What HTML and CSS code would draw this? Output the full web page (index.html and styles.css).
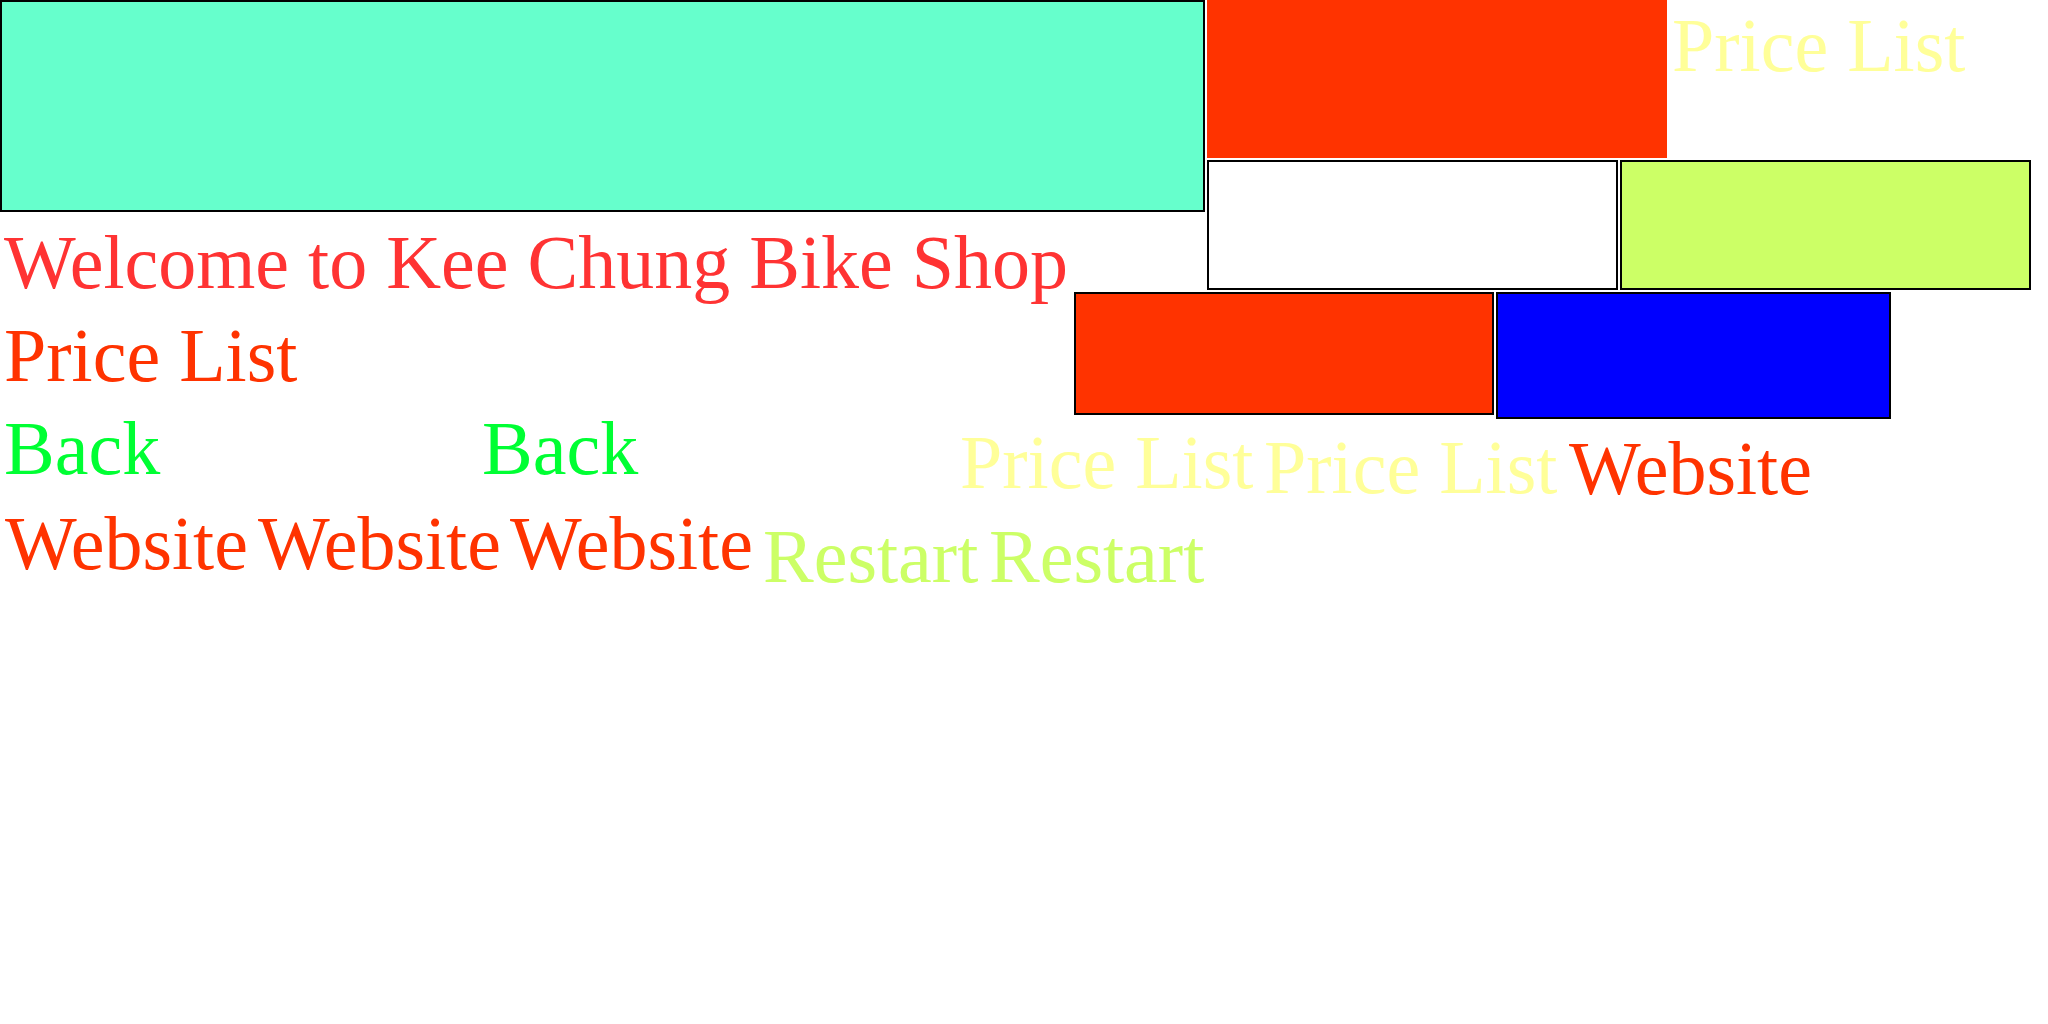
FILE: index.html
```html
<!DOCTYPE html>
<html lang="en">
<head>
<meta charset="utf-8">
<title>Kee Chung Bike Shop</title>
<link rel="stylesheet" href="styles.css">
</head>
<body>
<div class="stage">
  <div class="box teal"></div>
  <div class="box red-top"></div>
  <div class="box white"></div>
  <div class="box lime"></div>
  <div class="box red-mid"></div>
  <div class="box blue"></div>

  <div class="label welcome">Welcome to Kee Chung Bike Shop</div>
  <div class="label price-red">Price List</div>
  <div class="label back back-1">Back</div>
  <div class="label back back-2">Back</div>
  <div class="label website website-1">Website</div>
  <div class="label website website-2">Website</div>
  <div class="label website website-3">Website</div>
  <div class="label restart restart-1">Restart</div>
  <div class="label restart restart-2">Restart</div>
  <div class="label price-yellow price-y-1">Price List</div>
  <div class="label price-yellow price-y-2">Price List</div>
  <div class="label website website-4">Website</div>
  <div class="label price-yellow price-y-top">Price List</div>
</div>
</body>
</html>
```
FILE: styles.css
```css
html, body {
  margin: 0;
  padding: 0;
  background: #ffffff;
}

.stage {
  position: relative;
  width: 2048px;
  height: 1024px;
  overflow: hidden;
  font-family: "Liberation Serif", "Times New Roman", serif;
}

.box {
  position: absolute;
  box-sizing: border-box;
  border: 2px solid #000000;
}

.teal { left: 0; top: 0; width: 1205px; height: 212px; background: #66ffcc; }
.red-top { left: 1207px; top: 0; width: 460px; height: 158px; background: #ff3300; border: none; }
.white { left: 1207px; top: 160px; width: 411px; height: 130px; background: #ffffff; }
.lime { left: 1620px; top: 160px; width: 411px; height: 130px; background: #ccff66; }
.red-mid { left: 1074px; top: 292px; width: 420px; height: 123px; background: #ff3300; }
.blue { left: 1496px; top: 292px; width: 395px; height: 127px; background: #0000ff; }

.label {
  position: absolute;
  font-size: 76px;
  line-height: 76px;
  white-space: nowrap;
}

.welcome { left: 4px; top: 224px; color: #ff3333; }
.price-red { left: 4px; top: 317px; color: #ff3300; }

.back { color: #00ff33; top: 410px; }
.back-1 { left: 4px; }
.back-2 { left: 482px; }

.website { color: #ff3300; }
.website-1 { left: 5px; top: 505px; }
.website-2 { left: 258px; top: 505px; }
.website-3 { left: 510px; top: 505px; }
.website-4 { left: 1569px; top: 430px; }

.restart { color: #ccff66; top: 518px; }
.restart-1 { left: 763px; }
.restart-2 { left: 989px; }

.price-yellow { color: #ffff99; }
.price-y-1 { left: 960px; top: 424px; }
.price-y-2 { left: 1264px; top: 429px; }
.price-y-top { left: 1672px; top: 7px; }
```
